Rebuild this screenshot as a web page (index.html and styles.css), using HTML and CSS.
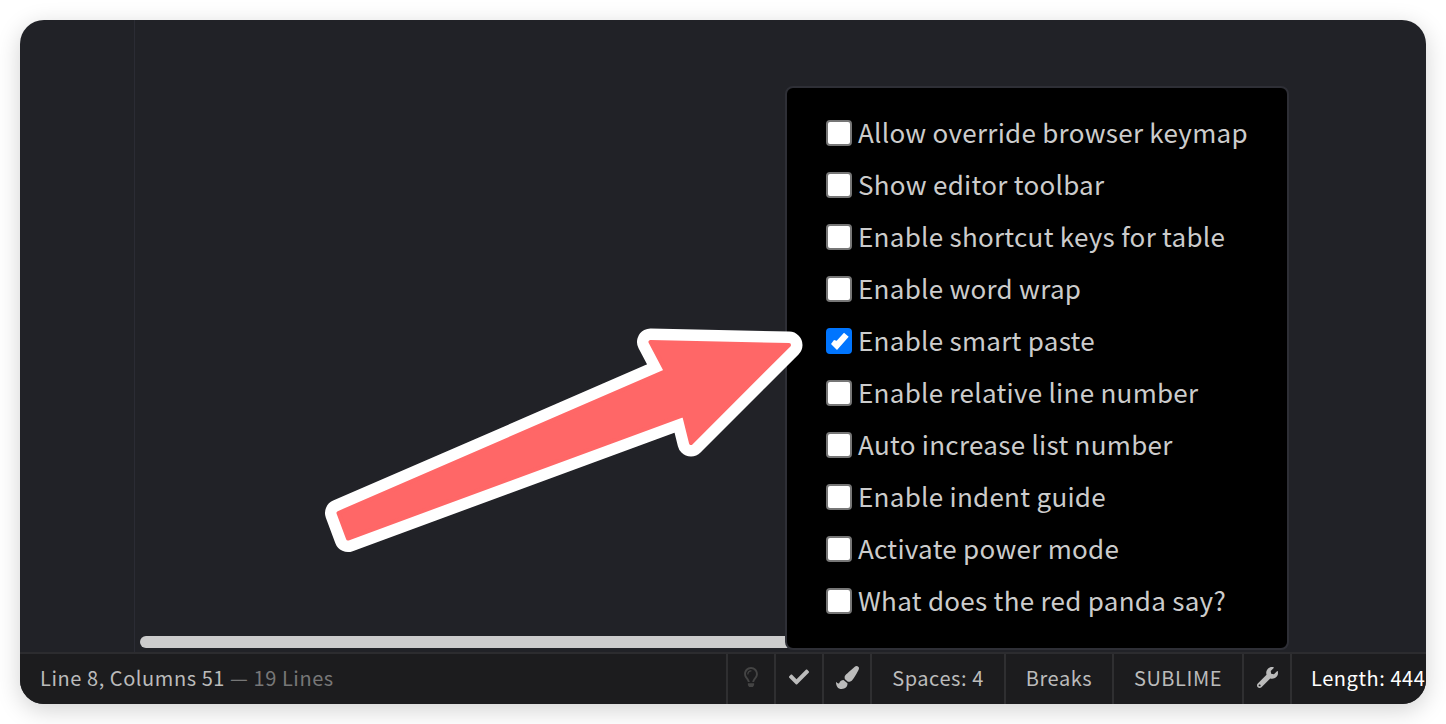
FILE: index.html
```html
<!DOCTYPE html>
<html>
<head>
  <title>Editor settings</title>
  <link rel="stylesheet" href="styles.css">
</head>
<body>
<div class="window">
  <div class="editor">
    <div class="gutter"></div>
    <div class="code"></div>
    <div class="scrollbar"></div>
  </div>

  <div class="status">
    <div class="status-left">Line 8, Columns 51 <span class="dim">&mdash; 19 Lines</span></div>
    <div class="cell cell-icon muted">
      <svg viewBox="0 0 352 512" width="14" height="20"><path d="M176 80c-52.94 0-96 43.06-96 96 0 8.84 7.16 16 16 16s16-7.16 16-16c0-35.3 28.72-64 64-64 8.84 0 16-7.16 16-16s-7.16-16-16-16zM96.06 459.17c0 3.15.93 6.22 2.68 8.84l24.51 36.84c2.97 4.46 7.97 7.14 13.32 7.14h78.85c5.36 0 10.36-2.68 13.32-7.14l24.51-36.84c1.74-2.62 2.67-5.7 2.68-8.84l.05-43.18H96.02l.04 43.18zM176 0C73.72 0 0 82.97 0 176c0 44.37 16.45 84.85 43.56 115.78 16.64 18.99 42.74 58.8 52.42 92.16v.06h48v-.12c-.01-4.77-.72-9.51-2.15-14.07-5.59-17.81-22.82-64.77-62.17-109.67-20.54-23.43-31.52-53.15-31.61-84.14-.2-73.64 59.67-128 127.95-128 70.58 0 128 57.42 128 128 0 30.97-11.24 60.85-31.65 84.14-39.11 44.61-56.42 91.47-62.1 109.46a47.507 47.507 0 0 0-2.22 14.3v.1h48v-.05c9.68-33.37 35.78-73.18 52.42-92.16C335.55 260.85 352 220.37 352 176 352 78.8 273.2 0 176 0z"/></svg>
    </div>
    <div class="cell cell-icon">
      <svg viewBox="0 0 512 512" width="20" height="20"><path d="M173.898 439.404l-166.4-166.4c-9.997-9.997-9.997-26.206 0-36.204l36.203-36.204c9.997-9.998 26.207-9.998 36.204 0L192 312.69 432.095 72.596c9.997-9.997 26.206-9.997 36.204 0l36.203 36.204c9.997 9.997 9.997 26.206 0 36.204l-294.4 294.401c-9.998 9.997-26.207 9.997-36.204-.001z"/></svg>
    </div>
    <div class="cell cell-icon">
      <svg viewBox="0 0 512 512" width="23" height="23"><path d="M167.02 309.34c-40.12 2.58-76.53 17.86-97.19 72.3-2.35 6.21-8 9.98-14.59 9.98-11.11 0-45.46-27.67-55.25-34.35C0 439.62 37.93 512 128 512c75.86 0 128-43.77 128-120.19 0-3.11-.65-6.08-.97-9.13l-88.01-73.34zM457.89 0c-15.16 0-29.37 6.71-40.21 16.45C213.27 199.05 192 203.34 192 257.09c0 13.7 3.25 26.76 8.73 38.7l63.82 53.18c7.21 1.8 14.64 3.03 22.39 3.03 62.11 0 98.11-45.47 211.16-256.46 7.38-14.35 13.9-29.85 13.9-45.99C512 20.64 486 0 457.89 0z"/></svg>
    </div>
    <div class="cell cell-spaces">Spaces: 4</div>
    <div class="cell cell-breaks">Breaks</div>
    <div class="cell cell-mode">SUBLIME</div>
    <div class="cell cell-icon">
      <svg viewBox="0 0 512 512" width="21" height="21"><path d="M507.73 109.1c-2.24-9.03-13.54-12.09-20.12-5.51l-74.36 74.36-67.88-11.31-11.31-67.88 74.36-74.36c6.62-6.62 3.43-17.9-5.66-20.16-47.38-11.74-99.55.91-136.58 37.93-39.64 39.64-50.55 97.1-34.05 147.2L18.74 402.76c-24.99 24.99-24.99 65.51 0 90.5 24.99 24.99 65.51 24.99 90.5 0l213.21-213.21c50.12 16.71 107.47 5.68 147.37-34.22 37.07-37.07 49.7-89.32 37.91-136.73zM64 472c-13.25 0-24-10.75-24-24 0-13.26 10.75-24 24-24s24 10.74 24 24c0 13.25-10.75 24-24 24z"/></svg>
    </div>
    <div class="cell cell-length">Length: 444</div>
  </div>

  <!-- Settings popup -->
  <div class="popup">
    <label class="option"><input type="checkbox"> Allow override browser keymap</label>
    <label class="option"><input type="checkbox"> Show editor toolbar</label>
    <label class="option"><input type="checkbox"> Enable shortcut keys for table</label>
    <label class="option"><input type="checkbox"> Enable word wrap</label>
    <label class="option"><input type="checkbox" checked> Enable smart paste</label>
    <label class="option"><input type="checkbox"> Enable relative line number</label>
    <label class="option"><input type="checkbox"> Auto increase list number</label>
    <label class="option"><input type="checkbox"> Enable indent guide</label>
    <label class="option"><input type="checkbox"> Activate power mode</label>
    <label class="option"><input type="checkbox"> What does the red panda say?</label>
  </div>
</div>

<svg class="arrow" width="1446" height="724" viewBox="0 0 1446 724">
  <polygon class="arrow-edge" points="338.5,513 665.8,371 650.5,342 789,345 691,443 684,414.8 348,538.5"/>
  <polygon class="arrow-fill" points="338.5,513 665.8,371 650.5,342 789,345 691,443 684,414.8 348,538.5"/>
</svg>
</body>
</html>
```

FILE: styles.css
```css
html, body {
  height: 100%;
}

body {
  margin: 0;
  padding: 20px;
  box-sizing: border-box;
  background-color: #fff;
  font-family: "Noto Sans CJK SC", "Noto Sans", sans-serif;
  overflow: hidden;
}

.window {
  position: relative;
  height: 684px;
  display: flex;
  flex-direction: column;
  background-color: #212227;
  border-radius: 24px;
  box-shadow: 0 6px 24px rgba(0, 0, 0, 0.18);
  overflow: hidden;
}

.editor {
  position: relative;
  flex: 1;
  display: flex;
}

.gutter {
  width: 114px;
  border-right: 1px solid #2b2c34;
}

.code {
  flex: 1;
}

.scrollbar {
  position: absolute;
  left: 120px;
  bottom: 4px;
  width: 680px;
  height: 12px;
  border-radius: 6px;
  background-color: #cccccc;
}

.status {
  height: 50px;
  display: flex;
  align-items: stretch;
  background-color: #1c1c1e;
  border-top: 2px solid #2c2c2f;
  color: #bbbbbb;
  font-size: 20px;
  letter-spacing: 0.57px;
}

.status-left {
  flex: 1;
  min-width: 0;
  padding: 0 0 4px 20px;
  display: flex;
  align-items: center;
  white-space: pre;
}

.dim {
  color: #777777;
}

.cell {
  display: flex;
  align-items: center;
  justify-content: center;
  flex: none;
  box-sizing: border-box;
  padding-bottom: 4px;
  border-left: 2px solid #2f2f31;
  white-space: nowrap;
}

.cell-icon {
  width: 48px;
}

.cell-icon svg {
  fill: #bbbbbb;
}

.muted svg {
  fill: #444444;
}

.cell-spaces {
  width: 134px;
}

.cell-breaks {
  width: 108px;
}

.cell-mode {
  width: 130px;
}

.cell-length {
  width: 136px;
  padding-left: 19px;
  justify-content: flex-start;
  color: #ffffff;
}

.popup {
  position: absolute;
  left: 765px;
  top: 66px;
  width: 504px;
  height: 564px;
  box-sizing: border-box;
  padding: 17px 0 0 39px;
  background-color: #000;
  border: 2px solid #2e2f36;
  border-radius: 8px;
}

.option {
  height: 52px;
  display: flex;
  align-items: center;
  gap: 6px;
  color: #cccccc;
  font-size: 26px;
  letter-spacing: 0.28px;
  white-space: nowrap;
}

.option input {
  appearance: none;
  position: relative;
  flex: none;
  width: 26px;
  height: 26px;
  margin: 4px 0 0;
  box-sizing: border-box;
  background-color: #fff;
  border: 2px solid #767676;
  border-radius: 4px;
}

.option input:checked {
  background-color: #0075ff;
  border-color: #0075ff;
}

.option input:checked::after {
  content: "";
  position: absolute;
  inset: 0;
  background-color: #fff;
  clip-path: polygon(3px 14px, 9px 20px, 20.7px 6.7px, 16px 2.7px, 8.7px 10.7px, 6px 10px);
}

.arrow {
  position: absolute;
  left: 0;
  top: 0;
}

.arrow-edge {
  fill: #fff;
  stroke: #fff;
  stroke-width: 27px;
  stroke-linejoin: round;
}

.arrow-fill {
  fill: #ff6767;
  stroke: #ff6767;
  stroke-width: 4px;
  stroke-linejoin: round;
}
```
